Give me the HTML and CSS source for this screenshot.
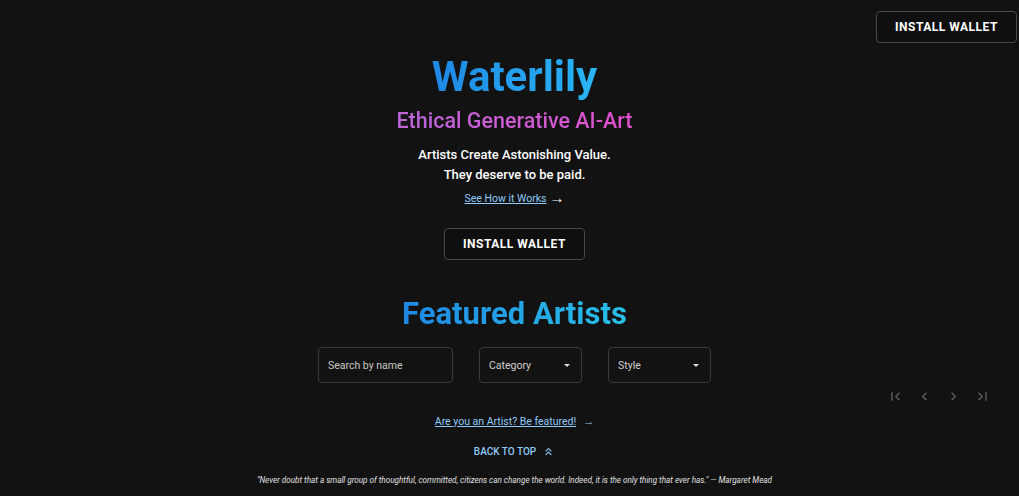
FILE: index.html
```html
<!DOCTYPE html>
<html lang="en">
<head>
    <meta charset="UTF-8">
    <meta name="viewport" content="width=device-width, initial-scale=1.0">
    <title>Waterlily</title>
    <link rel="stylesheet" href="styles.css">
</head>
<body>
    <header class="topbar">
        <button class="outline-btn">INSTALL WALLET</button>
    </header>

    <section class="hero">
        <h1 class="title">Waterlily</h1>
        <h2 class="subtitle">Ethical Generative AI-Art</h2>
        <p class="tagline">Artists Create Astonishing Value.<br>They deserve to be paid.</p>
        <div class="how"><a class="link" href="#">See How it Works</a><span class="arrow">&#8594;</span></div>
        <button class="outline-btn hero-btn">INSTALL WALLET</button>
    </section>

    <section class="featured">
        <h2 class="featured-title">Featured Artists</h2>
        <div class="filters">
            <div class="field search">Search by name</div>
            <div class="field select">Category <span class="caret"></span></div>
            <div class="field select">Style <span class="caret"></span></div>
        </div>
        <div class="pager">
            <svg viewBox="0 0 24 24"><path d="M18.41 16.59 13.82 12l4.59-4.59L17 6l-6 6 6 6zM6 6h2v12H6z"/></svg>
            <svg viewBox="0 0 24 24"><path d="M15.41 7.41 14 6l-6 6 6 6 1.41-1.41L10.83 12z"/></svg>
            <svg viewBox="0 0 24 24"><path d="M10 6 8.59 7.41 13.17 12l-4.58 4.59L10 18l6-6z"/></svg>
            <svg viewBox="0 0 24 24"><path d="M5.59 7.41 10.18 12l-4.59 4.59L7 18l6-6-6-6zM16 6h2v12h-2z"/></svg>
        </div>
    </section>

    <footer class="footer">
        <div class="artist-row"><a class="link" href="#">Are you an Artist? Be featured!</a><span class="arrow small">&#8594;</span></div>
        <div class="back-top">BACK TO TOP
            <svg viewBox="0 0 24 24"><path d="M6 17.59 7.41 19 12 14.42 16.59 19 18 17.59l-6-6z"/><path d="m6 11 1.41 1.41L12 7.83l4.59 4.58L18 11l-6-6z"/></svg>
        </div>
        <p class="quote">"Never doubt that a small group of thoughtful, committed, citizens can change the world. Indeed, it is the only thing that ever has." &mdash; Margaret Mead</p>
    </footer>
</body>
</html>
```

FILE: styles.css
```css
body {
    margin: 0;
    background-color: #121212;
    color: #fff;
    font-family: 'Roboto', 'Liberation Sans', sans-serif;
    height: 496px;
    overflow: hidden;
}

.topbar {
    display: flex;
    justify-content: flex-end;
    padding: 11px 2px 0 0;
}

.outline-btn {
    background-color: #0f0f0f;
    color: #fff;
    border: 1px solid #4a4a4a;
    border-radius: 4px;
    font-family: inherit;
    font-size: 12px;
    font-weight: 700;
    letter-spacing: 0.5px;
    width: 141px;
    height: 32px;
    padding: 0;
}

.hero,
.featured,
.footer {
    display: flex;
    flex-direction: column;
    align-items: center;
    text-align: center;
    padding-left: 10px;
}

.title {
    margin: 8px 0 0;
    font-size: 42px;
    line-height: 52px;
    font-weight: 700;
    background: linear-gradient(90deg, #1e88e5, #29b6f6);
    -webkit-background-clip: text;
    background-clip: text;
    color: transparent;
}

.subtitle {
    margin: 4px 0 0;
    font-size: 21.5px;
    line-height: 28px;
    font-weight: 500;
    background: linear-gradient(90deg, #bb66d8, #e04fcf);
    -webkit-background-clip: text;
    background-clip: text;
    color: transparent;
}

.tagline {
    margin: 10px 0 0;
    font-size: 13px;
    line-height: 20px;
    font-weight: 500;
}

.link {
    color: #90caf9;
    font-size: 10.5px;
    text-decoration: underline;
}

.how {
    display: flex;
    align-items: center;
    height: 12px;
    margin-top: 7px;
}

.arrow {
    color: #fff;
    font-size: 15px;
    line-height: 12px;
    margin-left: 3px;
}

.hero-btn {
    margin-top: 24px;
}

.featured-title {
    margin: 34px 0 0;
    font-size: 31px;
    line-height: 40px;
    font-weight: 700;
    background: linear-gradient(90deg, #1e88e5, #29c0e8);
    -webkit-background-clip: text;
    background-clip: text;
    color: transparent;
}

.filters {
    display: flex;
    gap: 26px;
    margin-top: 13px;
}

.field {
    box-sizing: border-box;
    height: 36px;
    border: 1px solid #3a3a3a;
    border-radius: 4px;
    display: flex;
    align-items: center;
    padding: 0 9px;
    font-size: 10.5px;
    color: #c8c8c8;
}

.search {
    width: 135px;
}

.select {
    width: 103px;
    justify-content: space-between;
    color: #d0d0d0;
}

.caret {
    width: 0;
    height: 0;
    border-left: 3.5px solid transparent;
    border-right: 3.5px solid transparent;
    border-top: 3.5px solid #e0e0e0;
    margin-right: 2px;
}

.pager {
    align-self: flex-end;
    display: flex;
    gap: 12px;
    margin: 5px 28px 0 0;
}

.pager svg {
    width: 17px;
    height: 17px;
    fill: #5e5e5e;
}

.footer {
    margin-top: 10px;
}

.artist-row {
    display: flex;
    align-items: center;
}

.arrow.small {
    color: #90caf9;
    font-size: 11px;
    margin-left: 7px;
}

.back-top {
    display: flex;
    align-items: center;
    margin-top: 17px;
    color: #90caf9;
    font-size: 10px;
    font-weight: 500;
}

.back-top svg {
    width: 13px;
    height: 13px;
    fill: #90caf9;
    margin-left: 6px;
}

.quote {
    margin: 17px 0 0;
    font-size: 8.15px;
    font-style: italic;
    color: #e0e0e0;
}
```
